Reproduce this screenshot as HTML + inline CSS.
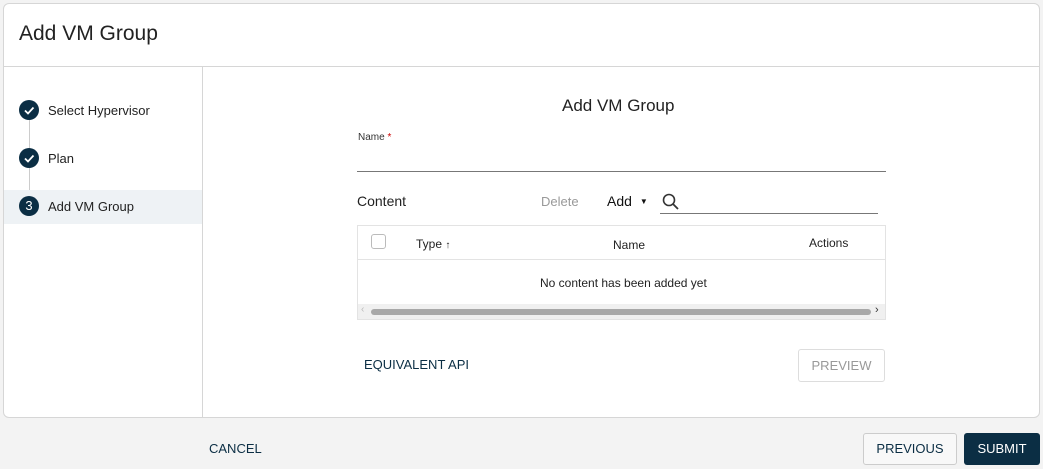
<!DOCTYPE html><html><head><style>
*{box-sizing:border-box;margin:0;padding:0}
body{width:1043px;height:469px;background:#f3f3f3;font-family:"Liberation Sans",sans-serif;color:#222;position:relative;overflow:hidden}
.card{position:absolute;left:3px;top:3px;width:1037px;height:415px;background:#fff;border:1px solid #d6d6d6;border-radius:6px}
.hdr{position:absolute;left:0;top:0;right:0;height:63px;border-bottom:1px solid #d6d6d6;font-size:21px;padding:18px 0 0 15px;color:#222}
.side{position:absolute;left:0;top:63px;width:199px;bottom:0;border-right:1px solid #d6d6d6}
.step{position:absolute;left:15px;width:20px;height:20px;border-radius:50%;background:#0b2e44;color:#fff;font-size:13px;text-align:center;line-height:20px}
.lbl{position:absolute;left:44px;font-size:13px;color:#222}
.line{position:absolute;left:25px;width:1px;background:#ccc}
.abs{position:absolute}
</style></head><body>
<div class="card">
<div class="hdr">Add VM Group</div>
<div class="side">
<div class="line" style="top:51px;height:80px"></div>
<div class="abs" style="left:0;top:123px;width:198px;height:34px;background:#eef2f5"></div>
<div class="step" style="top:33px"><svg width="20" height="20"><path d="M6 10.5l3 3 5.5-6" stroke="#fff" stroke-width="1.8" fill="none"/></svg></div>
<div class="lbl" style="top:36px">Select Hypervisor</div>
<div class="step" style="top:81px"><svg width="20" height="20"><path d="M6 10.5l3 3 5.5-6" stroke="#fff" stroke-width="1.8" fill="none"/></svg></div>
<div class="lbl" style="top:84px">Plan</div>
<div class="step" style="top:129px">3</div>
<div class="lbl" style="top:132px">Add VM Group</div>
</div>
<div class="abs" style="left:558px;top:92px;font-size:17px;color:#222">Add VM Group</div>
<div class="abs" style="left:354px;top:128px;font-size:10px;color:#333">Name <span style="color:#c00">*</span></div>
<div class="abs" style="left:353px;top:167px;width:529px;height:1px;background:#777"></div>
<div class="abs" style="left:353px;top:189px;font-size:14px">Content</div>
<div class="abs" style="left:537px;top:190px;font-size:13px;color:#999">Delete</div>
<div class="abs" style="left:603px;top:189px;font-size:14px;color:#111">Add <span style="font-size:8px;margin-left:4px;position:relative;top:-2px">▼</span></div>
<svg class="abs" style="left:657px;top:188px" width="20" height="20"><circle cx="8" cy="8" r="5.5" stroke="#333" stroke-width="1.6" fill="none"/><path d="M12 12l5 5" stroke="#333" stroke-width="1.8"/></svg>
<div class="abs" style="left:656px;top:209px;width:218px;height:1px;background:#777"></div>
<div class="abs" style="left:353px;top:221px;width:529px;height:95px;border:1px solid #e3e3e3">
<div class="abs" style="left:13px;top:8px;width:15px;height:15px;border:1px solid #bbb;border-radius:3px"></div>
<div class="abs" style="left:58px;top:11px;font-size:12px">Type <span style="font-size:10px">↑</span></div>
<div class="abs" style="left:255px;top:12px;font-size:12px">Name</div>
<div class="abs" style="left:451px;top:10px;font-size:12px">Actions</div>
<div class="abs" style="left:0;top:33px;width:527px;height:1px;background:#e3e3e3"></div>
<div class="abs" style="left:182px;top:50px;font-size:12px">No content has been added yet</div>
<div class="abs" style="left:0;top:78px;width:527px;height:15px;background:#f0f0f0">
<div class="abs" style="left:13px;top:5px;width:500px;height:6px;border-radius:3px;background:#a8a8a8"></div>
<div class="abs" style="left:3px;top:0;font-size:10px;color:#bbb">‹</div>
<div class="abs" style="left:517px;top:0;font-size:11px;color:#333">›</div></div>
</div>
<div class="abs" style="left:360px;top:353px;font-size:13px;color:#0b2e44">EQUIVALENT API</div>
<div class="abs" style="left:794px;top:345px;width:87px;height:33px;border:1px solid #ddd;border-radius:3px;font-size:13px;color:#999;text-align:center;line-height:31px">PREVIEW</div>
</div>
<div class="abs" style="left:209px;top:441px;font-size:13px;color:#0b2e44">CANCEL</div>
<div class="abs" style="left:863px;top:433px;width:94px;height:32px;border:1px solid #ccc;border-radius:3px;background:#f8f8f8;font-size:13px;color:#0b2e44;text-align:center;line-height:30px">PREVIOUS</div>
<div class="abs" style="left:964px;top:433px;width:76px;height:32px;border-radius:3px;background:#0b2e44;font-size:13px;color:#fff;text-align:center;line-height:32px">SUBMIT</div>
</body></html>
